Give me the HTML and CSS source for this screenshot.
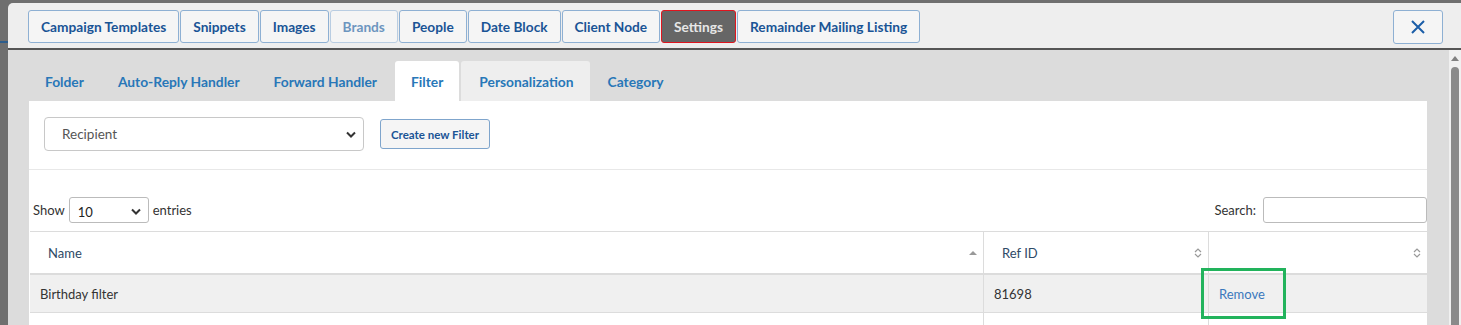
FILE: index.html
```html
<!DOCTYPE html>
<html lang="en">

<head>
    <meta charset="UTF-8">
    <meta name="viewport" content="width=device-width, initial-scale=1.0">
    <title>Settings - Filter</title>

    <link rel="stylesheet" href="styles.css">
</head>

<body>
    <div class="backdrop-line"></div>

    <div class="modal">
        <div class="modal-header">
            <div class="top-nav">
                <span class="nav-btn">Campaign Templates</span>
                <span class="nav-btn">Snippets</span>
                <span class="nav-btn">Images</span>
                <span class="nav-btn disabled">Brands</span>
                <span class="nav-btn">People</span>
                <span class="nav-btn">Date Block</span>
                <span class="nav-btn">Client Node</span>
                <span class="nav-btn active">Settings</span>
                <span class="nav-btn">Remainder Mailing Listing</span>
            </div>
            <span class="close-btn">
                <svg width="16" height="16" viewBox="0 0 16 16">
                    <path d="M2 2 L14 14 M14 2 L2 14" stroke="#1b5ea8" stroke-width="2" fill="none" />
                </svg>
            </span>
        </div>

        <div class="modal-body">
            <div class="main">
                <div class="tabs">
                    <span class="tab">Folder</span>
                    <span class="tab">Auto-Reply Handler</span>
                    <span class="tab">Forward Handler</span>
                    <span class="tab active">Filter</span>
                    <span class="tab hover">Personalization</span>
                    <span class="tab">Category</span>
                </div>

                <div class="panel">
                    <div class="filter-bar">
                        <div class="select big">
                            <span>Recipient</span>
                            <svg class="chev" width="10" height="7" viewBox="0 0 10 7">
                                <path d="M1 1.5 L5 5.5 L9 1.5" stroke="#333" stroke-width="2" fill="none" />
                            </svg>
                        </div>
                        <span class="small-btn">Create new Filter</span>
                    </div>

                    <div class="table-tools">
                        <div class="length">
                            Show
                            <div class="select small">
                                <span>10</span>
                                <svg class="chev" width="10" height="7" viewBox="0 0 10 7">
                                    <path d="M1 1.5 L5 5.5 L9 1.5" stroke="#333" stroke-width="2" fill="none" />
                                </svg>
                            </div>
                            entries
                        </div>
                        <div class="search">
                            Search:
                            <span class="search-input"></span>
                        </div>
                    </div>

                    <table class="grid">
                        <thead>
                            <tr>
                                <th class="col-name">Name
                                    <svg class="sort" width="8" height="6" viewBox="0 0 8 6">
                                        <path d="M0 5 L4 1 L8 5 Z" fill="#999" />
                                    </svg>
                                </th>
                                <th class="col-ref">Ref ID
                                    <svg class="sort" width="8" height="12" viewBox="0 0 8 12">
                                        <path d="M1 5 L4 2 L7 5 M1 7 L4 10 L7 7" stroke="#999" stroke-width="1.2" fill="none" />
                                    </svg>
                                </th>
                                <th class="col-act">
                                    <svg class="sort" width="8" height="12" viewBox="0 0 8 12">
                                        <path d="M1 5 L4 2 L7 5 M1 7 L4 10 L7 7" stroke="#999" stroke-width="1.2" fill="none" />
                                    </svg>
                                </th>
                            </tr>
                        </thead>
                        <tbody>
                            <tr class="odd">
                                <td>Birthday filter</td>
                                <td>81698</td>
                                <td class="act"><a href="#">Remove</a><span class="highlight"></span></td>
                            </tr>
                            <tr>
                                <td></td>
                                <td></td>
                                <td></td>
                            </tr>
                        </tbody>
                    </table>
                </div>
            </div>

            <div class="scrollbar">
                <svg width="10" height="6" viewBox="0 0 10 6">
                    <path d="M1 6 L5 1 L9 6 Z" fill="#808080" />
                </svg>
                <div class="thumb"></div>
            </div>
        </div>
    </div>
</body>

</html>
```

FILE: styles.css
```css
/* page behind the dialog */
body {
    margin: 0;
    padding: 3px 0 0 8px;
    background: #6f6f6f;
    font-family: Lato, "Noto Sans", sans-serif;
    font-size: 13px;
    color: #333;
    height: 325px;
    box-sizing: border-box;
    overflow: hidden;
    position: relative;
}

.backdrop-line {
    position: absolute;
    left: 0;
    top: 41px;
    width: 8px;
    height: 2px;
    background: #2d5d8c;
}

.modal {
    background: #eeeeee;
    border-radius: 5px 0 0 0;
    height: 100%;
    display: flex;
    flex-direction: column;
}

/* top buttons */
.modal-header {
    display: flex;
    justify-content: space-between;
    align-items: flex-start;
    padding: 7px 18px 0 20px;
    height: 47px;
    box-sizing: border-box;
    border-bottom: 2px solid #555;
    flex: none;
}

.top-nav {
    display: flex;
    gap: 1px;
}

.nav-btn {
    display: flex;
    align-items: center;
    height: 33px;
    box-sizing: border-box;
    padding: 0 12px 1px;
    background: #f5f5f5;
    border: 1px solid #8eb0d3;
    border-radius: 3px;
    color: #1a5495;
    font-weight: 700;
    font-size: 13.7px;
}

.nav-btn.disabled {
    color: #6d95bf;
    border-color: #b9cde2;
}

.nav-btn.active {
    background: #666;
    border-color: #e0141e;
    color: #e6e6e6;
}

.close-btn {
    display: flex;
    align-items: center;
    justify-content: center;
    width: 50px;
    height: 34px;
    box-sizing: border-box;
    background: #f5f5f5;
    border: 1px solid #8eb0d3;
    border-radius: 3px;
}

/* body */
.modal-body {
    flex: 1;
    display: flex;
    background: #dcdcdc;
    min-height: 0;
}

.main {
    flex: 1;
    padding: 11px 22px 0 21px;
}

.tabs {
    display: flex;
    gap: 2px;
    height: 40px;
}

.tab {
    display: flex;
    align-items: center;
    padding: 0 16px;
    color: #2877b8;
    font-weight: 700;
    font-size: 13.8px;
    border-radius: 3px 3px 0 0;
}

.tab.active {
    background: #fff;
}

.tab.hover {
    background: #eeeeee;
    padding: 0 16px 0 18px;
}

.panel {
    background: #fff;
    height: 230px;
}

.filter-bar {
    display: flex;
    align-items: center;
    gap: 16px;
    padding: 16px 15px 18px;
    border-bottom: 1px solid #e8e8e8;
}

.select {
    display: flex;
    align-items: center;
    justify-content: space-between;
    box-sizing: border-box;
    border: 1px solid #c8c8c8;
    border-radius: 4px;
    background: #fff;
    color: #555;
}

.select.big {
    width: 320px;
    height: 34px;
    padding: 0 7px 0 17px;
    font-size: 13.5px;
}

.select.small {
    width: 80px;
    height: 26px;
    padding: 3px 7px 0 8px;
    color: #222;
    border-color: #bbb;
    border-radius: 3px;
}

.small-btn {
    display: flex;
    align-items: center;
    height: 30px;
    box-sizing: border-box;
    padding: 0 10px;
    background: #f5f5f5;
    border: 1px solid #7fa5cc;
    border-radius: 3px;
    color: #1a5495;
    font-weight: 700;
    font-size: 11.5px;
}

.table-tools {
    display: flex;
    justify-content: space-between;
    align-items: center;
    padding: 27px 0 8px 4px;
    font-size: 13px;
    color: #333;
}

.length,
.search {
    display: flex;
    align-items: center;
    gap: 4px;
}

.search-input {
    display: block;
    width: 164px;
    height: 26px;
    box-sizing: border-box;
    border: 1px solid #bbb;
    border-radius: 3px;
    margin-left: 3px;
}

/* data table */
.grid {
    width: calc(100% - 1px);
    margin-left: 1px;
    border-collapse: collapse;
    font-size: 13px;
}

.grid th {
    position: relative;
    height: 41px;
    text-align: left;
    font-weight: 400;
    color: #2e4a66;
    padding: 0 18px;
    border-top: 1px solid #dcdcdc;
    border-bottom: 2px solid #dcdcdc;
    border-left: 1px solid #dcdcdc;
}

.grid th:first-child {
    border-left: none;
}

.col-name {
    width: 917px;
}

.col-ref {
    width: 188px;
}

.sort {
    position: absolute;
    right: 6px;
    top: 50%;
    transform: translateY(-50%);
}

.grid td {
    position: relative;
    height: 37px;
    padding: 0 10px;
    border-bottom: 1px solid #dcdcdc;
    border-left: 1px solid #dcdcdc;
}

.grid td:first-child {
    border-left: none;
}

.grid tr.odd td {
    background: #f0f0f0;
}

.grid td a {
    color: #3a78bd;
    text-decoration: none;
}

.highlight {
    position: absolute;
    left: -8px;
    top: -7px;
    width: 85px;
    height: 51px;
    box-sizing: border-box;
    border: 3px solid #22b35c;
}

/* scrollbar */
.scrollbar {
    width: 12px;
    background: #f0f0f0;
    display: flex;
    flex-direction: column;
    align-items: center;
    padding-top: 5px;
    gap: 6px;
}

.thumb {
    width: 8px;
    flex: 1;
    background: #8a8a8a;
    border-radius: 4px 4px 0 0;
}
```
